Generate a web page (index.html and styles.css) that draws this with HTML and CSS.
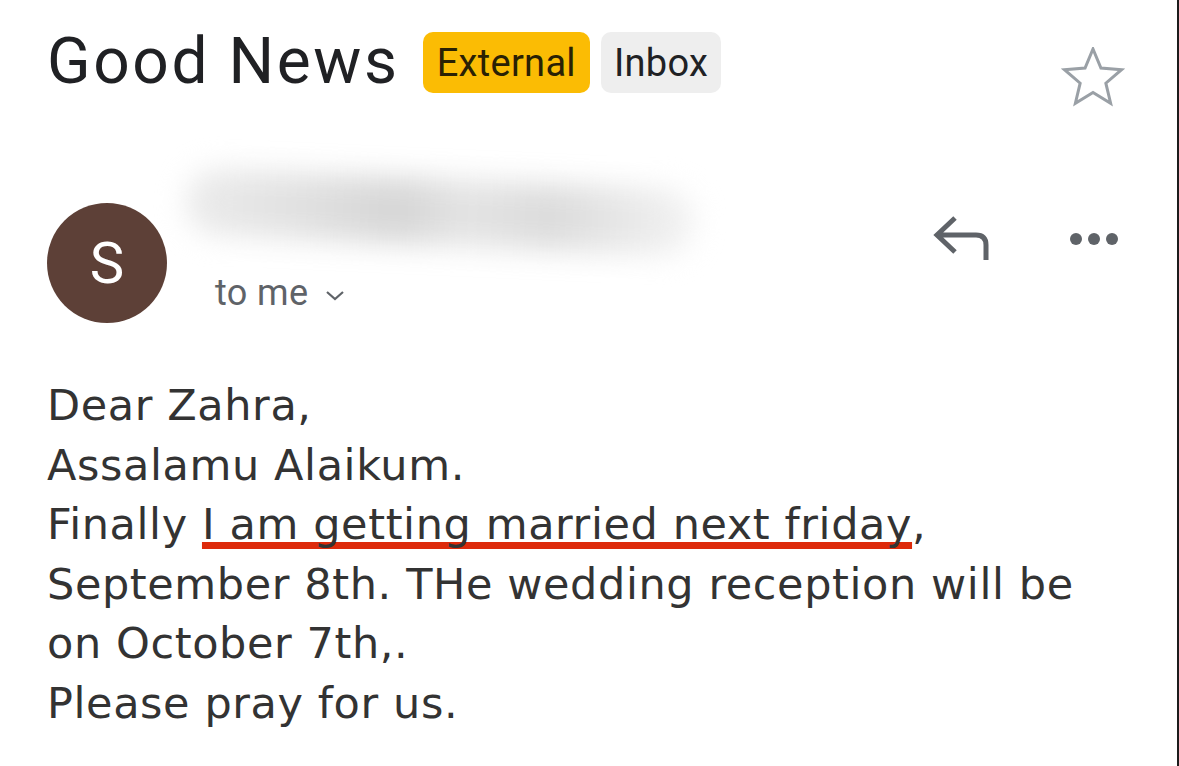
FILE: index.html
```html
<!DOCTYPE html>
<html lang="en">
<head>
<meta charset="utf-8">
<title>Good News</title>
<link rel="stylesheet" href="styles.css">
</head>
<body>
<div class="page">
  <div class="subject">
    <h1 class="title">Good News</h1>
    <span class="badge badge-external">External</span>
    <span class="badge badge-inbox">Inbox</span>
    <svg class="star" width="64" height="60" viewBox="0 0 64 60" aria-hidden="true">
      <path d="M32 2 L39.94 21.08 L60.53 22.73 L44.84 36.17 L49.63 56.27 L32 45.5 L14.37 56.27 L19.16 36.17 L3.47 22.73 L24.06 21.08 Z" fill="none" stroke="#9aa0a6" stroke-width="3" stroke-linejoin="miter"/>
    </svg>
  </div>

  <div class="sender">
    <div class="avatar">S</div>
    <div class="meta">
      <div class="name-blur"></div>
      <div class="to-me">to me
        <svg class="chev" width="20" height="12" viewBox="0 0 20 12" aria-hidden="true">
          <path d="M2 3 L10 10 L18 3" fill="none" stroke="#5f6368" stroke-width="2.2"/>
        </svg>
      </div>
    </div>
    <div class="actions">
      <svg class="reply" width="60" height="46" viewBox="0 0 60 46" aria-hidden="true">
        <path d="M25 4 L7 21 L25 38 M7 21 H46 Q56 21 56 31 V46" fill="none" stroke="#5f6368" stroke-width="5" stroke-linejoin="miter"/>
      </svg>
      <svg class="more" width="56" height="46" viewBox="0 0 56 46" aria-hidden="true">
        <circle cx="7" cy="25" r="6" fill="#5f6368"/>
        <circle cx="25" cy="25" r="6" fill="#5f6368"/>
        <circle cx="43" cy="25" r="6" fill="#5f6368"/>
      </svg>
    </div>
  </div>

  <div class="message">
    <p class="line">Dear Zahra,</p>
    <p class="line">Assalamu Alaikum.</p>
    <p class="line">Finally <span class="mark">I am getting married next friday</span>,</p>
    <p class="line">September 8th. THe wedding reception will be</p>
    <p class="line">on October 7th,.</p>
    <p class="line">Please pray for us.</p>
  </div>
</div>
</body>
</html>
```

FILE: styles.css
```css
html, body {
  margin: 0;
  padding: 0;
  background: #ffffff;
}

.page {
  box-sizing: border-box;
  height: 766px;
  padding: 32px 52px 0 47px;
  border-right: 2px solid #1c1c1c;
  overflow: hidden;
}

.subject {
  display: flex;
  align-items: center;
  height: 61px;
}

.title {
  margin: -3px 23px 0 0;
  font-family: Roboto, "Open Sans", sans-serif;
  font-weight: 400;
  font-size: 64px;
  letter-spacing: 2.6px;
  line-height: 61px;
  color: #202124;
}

.badge {
  display: flex;
  align-items: center;
  height: 61px;
  padding: 0 14px;
  border-radius: 10px;
  font-family: Roboto, "Open Sans", sans-serif;
  font-size: 38px;
  letter-spacing: 0.3px;
  color: #202124;
}

.badge-external {
  background: #fbbc04;
  color: #2a2104;
}

.badge-inbox {
  margin-left: 11px;
  padding: 0 13px;
  background: #eeeeee;
}

.star {
  margin-left: auto;
  align-self: flex-start;
  margin-top: 15px;
}

.sender {
  display: flex;
  align-items: flex-start;
  margin-top: 72px;
}

.avatar {
  flex: none;
  width: 120px;
  height: 120px;
  margin-top: 38px;
  border-radius: 50%;
  background: #5d4037;
  color: #ffffff;
  font-family: Roboto, sans-serif;
  font-size: 58px;
  display: flex;
  align-items: center;
  justify-content: center;
}

.meta {
  display: flex;
  flex-direction: column;
  margin-left: 48px;
}

.name-blur {
  width: 510px;
  height: 66px;
  margin: 14px 0 0 -30px;
  border-radius: 34px;
  background: linear-gradient(90deg, #ececec 0%, #e0e0e0 25%, #d6d6d6 42%, #e4e4e4 55%, #dcdcdc 72%, #ebebeb 90%, #f3f3f3 100%);
  filter: blur(14px);
  transform: rotate(2.5deg);
}

.to-me {
  display: flex;
  align-items: center;
  gap: 16px;
  margin-top: 30px;
  font-family: Roboto, sans-serif;
  font-size: 36px;
  letter-spacing: 0.4px;
  line-height: 36px;
  color: #5f6368;
}

.chev {
  margin-top: 4px;
}

.actions {
  margin-left: auto;
  margin-top: 49px;
  display: flex;
  align-items: center;
  gap: 79px;
}

.message {
  margin-top: 53px;
  font-family: "DejaVu Sans", sans-serif;
  font-size: 43px;
  letter-spacing: 0.6px;
  line-height: 59.5px;
  color: #333333;
}

.line {
  margin: 0;
}

.mark {
  text-decoration: underline;
  text-decoration-color: #dd2a0b;
  text-decoration-thickness: 7px;
  text-underline-offset: 3px;
  text-decoration-skip-ink: none;
}
```
